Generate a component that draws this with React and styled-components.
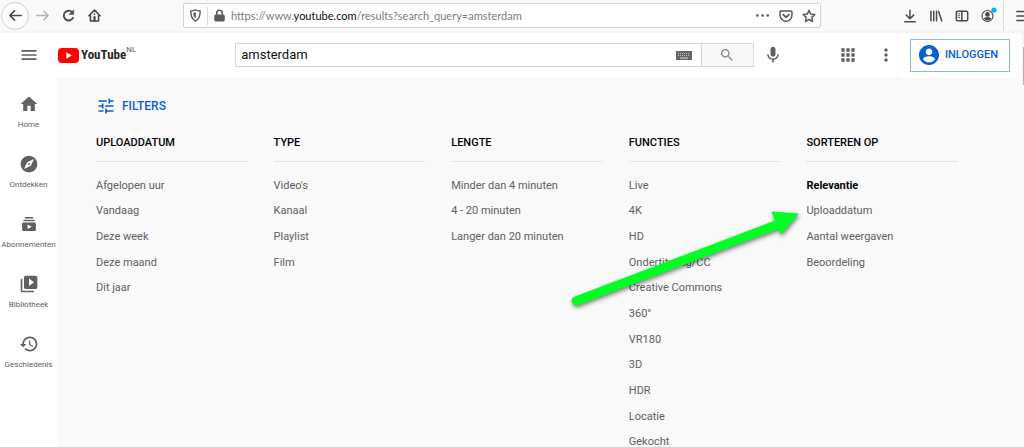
import React, {useState} from 'react';
import styled, {createGlobalStyle} from "styled-components";


const GlobalStyle = createGlobalStyle`
  * {
    box-sizing: border-box;
  }

  body {
    margin: 0;
    overflow: hidden;
    background-color: #f9f9f9;
    font-family: Roboto, "Liberation Sans", sans-serif;
    color: #606060;
  }

  button {
    padding: 0;
    border: 0;
    background: none;
    font-family: inherit;
    color: inherit;
    cursor: pointer;
  }

  svg {
    display: block;
    flex: none;
  }
`

const Page = styled.div`
  position: relative;
  display: flex;
  flex-direction: column;
  min-height: 100vh;
`

const Toolbar = styled.div`
  display: flex;
  align-items: center;
  height: 33px;
  padding-left: 1px;
  overflow: hidden;
  background-color: #f9f9fa;
  border-bottom: 2px solid #f4f4f5;
  color: #4a4a4e;
`

const ToolButton = styled.button`
  display: flex;
  flex: none;
  align-items: center;
  justify-content: center;
  width: 26px;
  height: 26px;
  border-radius: 50%;
  color: ${props => props.$faded ? "#b4b4b6" : "inherit"};
`

const BackButton = styled(ToolButton)`
  width: 28px;
  height: 28px;
  border: 1px solid #cfcfd0;
  background-color: #fcfcfc;
`

const MenuButton = styled(ToolButton)`
  margin-right: -13px;
`

const AddressBar = styled.div`
  display: flex;
  flex: 1;
  align-items: center;
  height: 25px;
  margin: 0 76px;
  border: 1px solid #d2d2d3;
  border-radius: 2px;
  background-color: #fff;
`

const AddressButton = styled(ToolButton)`
  width: 23px;
  height: 23px;
  color: #5c5c60;
`

const Divider = styled.span`
  flex: none;
  width: 1px;
  height: 18px;
  background-color: #dcdcdd;
`

const MenuDivider = styled(Divider)`
  height: 28px;
  margin: 0 7px 0 2px;
`

const Address = styled.div`
  flex: 1;
  font-family: Lato, "Open Sans", sans-serif;
  font-size: 11px;
  line-height: 16px;
  color: #7c7c7e;
  white-space: nowrap;

  b {
    font-weight: 400;
    color: #0c0c0d;
  }
`

const ToolGroup = styled.div`
  display: flex;
  flex: none;
  align-items: center;
`

const Header = styled.header`
  display: flex;
  align-items: center;
  height: 44px;
  padding: 0 12px 0 15px;
  border-right: 2px solid #f4f4f5;
  background-color: #fff;
`

const IconButton = styled.button`
  display: flex;
  flex: none;
  align-items: center;
  justify-content: center;
  width: 28px;
  height: 28px;
`

const MicButton = styled(IconButton)`
  margin-left: 5px;
`

const Logo = styled.a`
  display: flex;
  align-items: center;
  height: 24px;
  margin-left: 15px;
  color: #282828;
  text-decoration: none;
`

const Wordmark = styled.span`
  margin-left: 2px;
  font-family: "Roboto Condensed", Roboto, sans-serif;
  font-size: 13px;
  line-height: 24px;
  font-weight: 700;
`

const Country = styled.sup`
  align-self: flex-start;
  font-size: 8px;
  line-height: 14px;
  color: #606060;
`

const Search = styled.form`
  display: flex;
  flex: 1;
  align-items: center;
  margin-left: 99px;
`

const SearchField = styled.label`
  display: flex;
  flex: 1;
  align-items: center;
  height: 24px;
  padding-right: 8px;
  border: 1px solid #d3d3d3;
  border-radius: 1px 0 0 1px;
  background-color: #fff;
`

const SearchInput = styled.input`
  flex: 1;
  min-width: 0;
  padding: 0 5px;
  border: 0;
  outline: 0;
  background: none;
  font-family: inherit;
  font-size: 13px;
  line-height: 20px;
  color: #111;
`

const SearchButton = styled.button`
  display: flex;
  align-items: center;
  justify-content: center;
  width: 52px;
  height: 24px;
  border: 1px solid #d9d9d9;
  border-left: 0;
  border-radius: 0 1px 1px 0;
  background-color: #f8f8f8;
  color: #888;
`

const Actions = styled.div`
  display: flex;
  align-items: center;
  gap: 10px;
  margin-left: 47px;
`

const SignIn = styled.a`
  display: flex;
  align-items: center;
  gap: 6px;
  height: 33px;
  padding: 0 11px 0 8px;
  border: 1px solid #8ab4ec;
  border-radius: 1px;
  font-size: 11px;
  line-height: 16px;
  font-weight: 500;
  color: #065fd4;
  text-decoration: none;
`

const Main = styled.div`
  display: flex;
  flex: 1;
`

const Sidebar = styled.nav`
  display: flex;
  flex: none;
  flex-direction: column;
  width: 57px;
  padding-top: 4px;
  background-color: #fff;
`

const SideLink = styled.a`
  display: flex;
  flex-direction: column;
  align-items: center;
  gap: 5px;
  height: 60px;
  padding-top: 13px;
  font-size: 8px;
  line-height: 12px;
  color: #606060;
  text-decoration: none;
`

const Content = styled.main`
  flex: 1;
  padding: 18px 66px 0 39px;
`

const FiltersButton = styled.button`
  display: flex;
  align-items: center;
  gap: 6px;
  height: 21px;
  font-size: 12px;
  line-height: 16px;
  font-weight: 500;
  color: #065fd4;
`

const Columns = styled.div`
  display: grid;
  grid-template-columns: repeat(5, 1fr);
  gap: 26px;
  margin-top: 18px;
`

const ColumnTitle = styled.h4`
  margin: 0;
  padding-bottom: 10px;
  border-bottom: 1px solid #e5e5e5;
  font-size: 11px;
  line-height: 17px;
  font-weight: 500;
  color: #030303;
`

const Options = styled.ul`
  display: grid;
  grid-template-rows: repeat(11, 1fr);
  align-items: center;
  min-height: 282px;
  margin: 11px 0 0;
  padding: 0;
  list-style: none;
`

const Option = styled.a`
  display: block;
  font-size: 11px;
  line-height: 16px;
  font-weight: ${props => props.$selected ? 700 : 400};
  color: ${props => props.$selected ? "#030303" : "#606060"};
  text-decoration: none;
  white-space: nowrap;
`

const Arrow = styled.svg`
  position: absolute;
  top: 200px;
  left: 564px;
  pointer-events: none;
  filter: drop-shadow(1px 2px 2px rgba(0, 0, 0, 0.5));
`

const ScrollThumb = styled.div`
  position: absolute;
  top: 47px;
  right: 0;
  width: 1px;
  height: 38px;
  background-color: #b4b4b4;
`

const columns = [
    {title: "UPLOADDATUM", options: ["Afgelopen uur", "Vandaag", "Deze week", "Deze maand", "Dit jaar"]},
    {title: "TYPE", options: ["Video's", "Kanaal", "Playlist", "Film"]},
    {title: "LENGTE", options: ["Minder dan 4 minuten", "4 - 20 minuten", "Langer dan 20 minuten"]},
    {
        title: "FUNCTIES",
        options: ["Live", "4K", "HD", "Ondertiteling/CC", "Creative Commons", "360°", "VR180", "3D", "HDR", "Locatie", "Gekocht"]
    },
    {title: "SORTEREN OP", options: ["Relevantie", "Uploaddatum", "Aantal weergaven", "Beoordeling"], selected: "Relevantie"},
]

const sideLinks = [
    {label: "Home", path: "M10 20.500v-6.500h4v6.500h5v-8.500h3L12 3 2 12h3v8.500z"},
    {
        label: "Ontdekken",
        path: "M12 10.9c-.61 0-1.1.49-1.1 1.1s.49 1.1 1.1 1.1 1.1-.49 1.1-1.1-.49-1.1-1.1-1.1zM12 2C6.48 2 2 6.48 2 12s4.48 10 10 10 10-4.48 10-10S17.52 2 12 2zm2.19 12.19L6 18l3.81-8.19L18 6l-3.81 8.19z"
    },
    {
        label: "Abonnementen",
        path: "M18.7 8.7H5.3V7h13.4v1.7zm-1.7-5H7v1.6h10V3.7zm3.3 8.3v6.7c0 1-.7 1.6-1.6 1.6H5.3c-1 0-1.6-.7-1.6-1.6V12c0-1 .7-1.7 1.6-1.7h13.4c1 0 1.6.8 1.6 1.7zm-5 3.3l-5-2.7V18l5-2.7z"
    },
    {
        label: "Bibliotheek",
        path: "M4 6H2v14c0 1.1.9 2 2 2h14v-2H4V6zm16-4H8c-1.1 0-2 .9-2 2v12c0 1.1.9 2 2 2h12c1.1 0 2-.9 2-2V4c0-1.1-.9-2-2-2zm-8 12.5v-9l6 4.5-6 4.5z"
    },
    {
        label: "Geschiedenis",
        path: "M13 3c-4.97 0-9 4.03-9 9H1l3.89 3.89.07.14L9 12H6c0-3.87 3.13-7 7-7s7 3.13 7 7-3.13 7-7 7c-1.93 0-3.68-.79-4.94-2.06l-1.42 1.42C8.27 19.99 10.51 21 13 21c4.97 0 9-4.03 9-9s-4.03-9-9-9zm-1 5v5l4.28 2.54.72-1.21-3.5-2.08V8H12z"
    },
]

const Icon = ({path, size = 20}) => (
    <svg width={size} height={size} viewBox="0 0 24 24" fill="currentColor" aria-hidden="true">
        <path d={path}/>
    </svg>
)

const LineIcon = ({children, size = 16}) => (
    <svg width={size} height={size} viewBox="0 0 16 16" fill="none" stroke="currentColor" strokeWidth="1.7"
         strokeLinecap="round" strokeLinejoin="round" aria-hidden="true">
        {children}
    </svg>
)

const BrowserToolbar = () => (
    <Toolbar>
        <BackButton aria-label="Terug">
            <LineIcon size={15}><path d="M14 8H2.500M7 3L2 8l5 5"/></LineIcon>
        </BackButton>
        <ToolButton $faded aria-label="Vooruit">
            <LineIcon size={15}><path d="M2 8h12M9.500 3.500L14 8l-4.500 4.500"/></LineIcon>
        </ToolButton>
        <ToolButton aria-label="Vernieuwen">
            <LineIcon size={15}>
                <path d="M12.800 10.500A5.200 5.200 0 1 1 11.800 4.300" strokeWidth="2"/>
                <path d="M13.500 2.200v4.600H8.900z" fill="currentColor" strokeWidth="0.600"/>
            </LineIcon>
        </ToolButton>
        <ToolButton aria-label="Startpagina">
            <LineIcon size={15}>
                <path d="M2 8.300l6-6 6 6M3.700 8v5.800h8.600V8"/>
                <path d="M8 13.500V9.800" strokeWidth="2.400"/>
                <path d="M8 6.600v.1" strokeWidth="1.800"/>
            </LineIcon>
        </ToolButton>
        <AddressBar>
            <AddressButton as="span">
                <LineIcon size={13}>
                    <path d="M8 1.200c2 .9 3.700 1.200 5.800 1.300 0 6-1 10-5.800 12.300C3.200 12.500 2.200 8.500 2.200 2.500 4.300 2.400 6 2.100 8 1.200z"/>
                    <path d="M8 5v6.200C6.300 10 5.800 8 5.700 5.300z" fill="currentColor" strokeWidth="0.800"/>
                </LineIcon>
            </AddressButton>
            <Divider/>
            <AddressButton as="span">
                <LineIcon size={13}>
                    <path d="M4.600 8V5a3.400 3.400 0 0 1 6.800 0v3" strokeWidth="2"/>
                    <rect x="2.400" y="7.500" width="11.200" height="7" rx="1" fill="currentColor"/>
                </LineIcon>
            </AddressButton>
            <Address>https://www.<b>youtube.com</b>/results?search_query=amsterdam</Address>
            <AddressButton aria-label="Paginaacties">
                <LineIcon size={15}><path d="M2.500 8h.1M8 8h.1M13.500 8h.1" strokeWidth="2.800"/></LineIcon>
            </AddressButton>
            <AddressButton aria-label="Pocket">
                <LineIcon size={14}>
                    <path d="M2.200 2.200h11.600q1 0 1 1v4a6.800 6.800 0 0 1-13.600 0v-4q0-1 1-1z"/>
                    <path d="M4.800 6.500L8 9.500l3.200-3" strokeWidth="2"/>
                </LineIcon>
            </AddressButton>
            <AddressButton aria-label="Bladwijzer">
                <LineIcon size={14}>
                    <path d="M8 1.500l2 4.300 4.600.6-3.400 3.200.9 4.700L8 12l-4.100 2.300.9-4.700L1.400 6.400 6 5.800z"/>
                </LineIcon>
            </AddressButton>
        </AddressBar>
        <ToolGroup>
            <ToolButton aria-label="Downloads">
                <LineIcon size={14}><path d="M8 1.500v9.500M3.800 7L8 11.200 12.200 7M2 14.500h12"/></LineIcon>
            </ToolButton>
            <ToolButton aria-label="Bibliotheek">
                <LineIcon size={14}><path d="M2.200 2.500v11M5.400 2.500v11M8.600 2.500v11M11 2.800l3.600 10.700"/></LineIcon>
            </ToolButton>
            <ToolButton aria-label="Zijbalk">
                <LineIcon size={14}>
                    <rect x="1.500" y="2.500" width="13" height="11" rx="1.500"/>
                    <path d="M7.800 2.500v11"/>
                    <path d="M3.600 5.500h1.800M3.600 7.700h1.800M3.600 9.900h1.800" strokeWidth="1"/>
                </LineIcon>
            </ToolButton>
            <ToolButton aria-label="Account">
                <svg width="18" height="18" viewBox="0 0 18 18" aria-hidden="true">
                    <circle cx="8.500" cy="9" r="5.500" fill="none" stroke="currentColor" strokeWidth="1.200"/>
                    <circle cx="8.500" cy="7.400" r="2.300" fill="currentColor"/>
                    <path d="M4.700 11.300q3.800-2.600 7.600 0-1.300 2.200-3.800 2.200t-3.800-2.200z" fill="currentColor"/>
                    <circle cx="15" cy="3" r="2.600" fill="#00b3f4"/>
                </svg>
            </ToolButton>
            <MenuDivider/>
        </ToolGroup>
        <MenuButton aria-label="Menu">
            <LineIcon><path d="M1 3.500h13M1 8h13M1 12.500h13"/></LineIcon>
        </MenuButton>
    </Toolbar>
)

const FilterColumn = ({title, options, selected}) => (
    <section>
        <ColumnTitle>{title}</ColumnTitle>
        <Options>
            {options.map(option =>
                <li key={option}>
                    <Option href="#" $selected={option === selected}>{option}</Option>
                </li>
            )}
        </Options>
    </section>
)

const App = () => {
    const [query, setQuery] = useState("amsterdam")

    return (
        <Page>
            <GlobalStyle/>
            <BrowserToolbar/>
            <Header>
                <IconButton aria-label="Gids">
                    <Icon path="M3 18h18v-2H3v2zm0-5h18v-2H3v2zm0-7v2h18V6H3z"/>
                </IconButton>
                <Logo href="#">
                    <svg width="21" height="15" viewBox="0 0 21 15" aria-hidden="true">
                        <rect width="21" height="15" rx="4" fill="#f00"/>
                        <path d="M8.300 4.300v6.400l5.600-3.200z" fill="#fff"/>
                    </svg>
                    <Wordmark>YouTube</Wordmark>
                    <Country>NL</Country>
                </Logo>
                <Search onSubmit={e => e.preventDefault()}>
                    <SearchField>
                        <SearchInput aria-label="Zoeken" value={query} onChange={e => setQuery(e.target.value)}/>
                        <svg width="18" height="11" viewBox="0 0 18 11" aria-hidden="true">
                            <rect x="1" y="1" width="16" height="9" fill="#666"/>
                            <path d="M3 3.500h12M3 5.500h12" stroke="#bbb" strokeDasharray="1 1"/>
                            <path d="M5 8h8" stroke="#ddd"/>
                        </svg>
                    </SearchField>
                    <SearchButton aria-label="Zoeken">
                        <Icon
                            size={16}
                            path="M15.500 14h-.79l-.28-.27C15.410 12.590 16 11.110 16 9.500 16 5.910 13.090 3 9.500 3S3 5.910 3 9.500 5.910 16 9.500 16c1.610 0 3.090-.59 4.230-1.570l.27.28v.79l5 4.990L20.490 19l-4.990-5zm-6 0C7.010 14 5 11.990 5 9.500S7.010 5 9.500 5 14 7.010 14 9.500 11.990 14 9.500 14z"
                        />
                    </SearchButton>
                    <MicButton type="button" aria-label="Zoeken met je stem">
                        <Icon path="M12 14c1.660 0 2.990-1.340 2.990-3L15 5c0-1.660-1.340-3-3-3S9 3.340 9 5v6c0 1.660 1.340 3 3 3zm5.300-3c0 3-2.540 5.100-5.300 5.100S6.700 14 6.700 11H5c0 3.410 2.720 6.230 6 6.720V21h2v-3.280c3.280-.48 6-3.300 6-6.720h-1.700z"/>
                    </MicButton>
                </Search>
                <Actions>
                    <IconButton aria-label="Apps">
                        <Icon path="M4 8h4V4H4v4zm6 12h4v-4h-4v4zm-6 0h4v-4H4v4zm0-6h4v-4H4v4zm6 0h4v-4h-4v4zm6-10v4h4V4h-4zm-6 4h4V4h-4v4zm6 6h4v-4h-4v4zm0 6h4v-4h-4v4z"/>
                    </IconButton>
                    <IconButton aria-label="Instellingen">
                        <Icon path="M12 8c1.100 0 2-.9 2-2s-.9-2-2-2-2 .9-2 2 .9 2 2 2zm0 2c-1.100 0-2 .9-2 2s.9 2 2 2 2-.9 2-2-.9-2-2-2zm0 6c-1.100 0-2 .9-2 2s.9 2 2 2 2-.9 2-2-.9-2-2-2z"/>
                    </IconButton>
                    <SignIn href="#">
                        <Icon
                            path="M12 0C5.370 0 0 5.370 0 12s5.370 12 12 12 12-5.370 12-12S18.630 0 12 0zm0 4.200c2.200 0 4 1.800 4 4s-1.800 4-4 4-4-1.800-4-4 1.800-4 4-4zm0 16.600c-3.200 0-5.900-1.500-7.300-3.800.8-2.400 4.900-3.400 7.300-3.400s6.500 1 7.300 3.400c-1.400 2.300-4.100 3.800-7.300 3.800z"
                        />
                        INLOGGEN
                    </SignIn>
                </Actions>
            </Header>
            <Main>
                <Sidebar>
                    {sideLinks.map(link =>
                        <SideLink href="#" key={link.label}>
                            <Icon path={link.path}/>
                            {link.label}
                        </SideLink>
                    )}
                </Sidebar>
                <Content>
                    <FiltersButton>
                        <Icon path="M3 17v2h6v-2H3zM3 5v2h10V5H3zm10 16v-2h8v-2h-8v-2h-2v6h2zM7 9v2H3v2h4v2h2V9H7zm14 4v-2H11v2h10zm-6-4h2V7h4V5h-4V3h-2v6z"/>
                        FILTERS
                    </FiltersButton>
                    <Columns>
                        {columns.map(column => <FilterColumn key={column.title} {...column}/>)}
                    </Columns>
                </Content>
            </Main>
            <Arrow width="240" height="110" viewBox="0 0 240 110" aria-hidden="true">
                <path d="M12 101L212 25" stroke="#0f2" strokeWidth="9" strokeLinecap="round"/>
                <path d="M208 12l26 2-17 20z" fill="#0f2" stroke="#0f2" strokeWidth="1"/>
            </Arrow>
            <ScrollThumb/>
        </Page>
    );
};

export default App;
